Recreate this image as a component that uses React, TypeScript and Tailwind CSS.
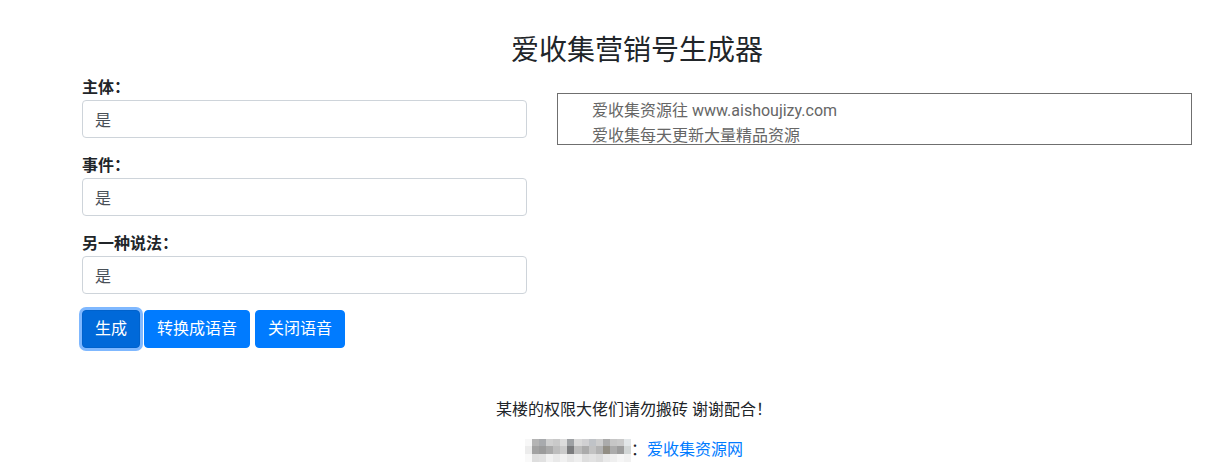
import React from 'react'

const mosaic = [
  ['bg-[#f7f7f7]', 'bg-[#b4b4b4]', 'bg-[#a8aaad]', 'bg-[#cfcfcf]', 'bg-[#c9c9c9]', 'bg-[#dcdcdc]', 'bg-[#9ea1a4]', 'bg-[#d9d9d9]', 'bg-[#d0d0d2]', 'bg-[#c0c3c7]', 'bg-[#cdcdcd]', 'bg-[#ababab]', 'bg-[#c6c6c6]', 'bg-[#cacaca]', 'bg-[#e2e6e8]'],
  ['bg-[#ececec]', 'bg-[#a2a2a2]', 'bg-[#9b9b9b]', 'bg-[#a9a9a9]', 'bg-[#bdbdbd]', 'bg-[#cbcbcb]', 'bg-[#7b7c7e]', 'bg-[#bcbcbc]', 'bg-[#ababab]', 'bg-[#c2c2c2]', 'bg-[#b2b2b2]', 'bg-[#928e84]', 'bg-[#acacac]', 'bg-[#9c9c9c]', 'bg-[#d2d6d6]'],
  ['bg-[#f9f9f9]', 'bg-[#dedede]', 'bg-[#e1e1e1]', 'bg-[#f1f1f1]', 'bg-[#e9e9e9]', 'bg-[#f1f1f1]', 'bg-[#e7e7e7]', 'bg-[#eeeeee]', 'bg-[#dedede]', 'bg-[#e2e2e2]', 'bg-[#dcdcdc]', 'bg-[#e9e9e9]', 'bg-[#efefef]', 'bg-[#f6f6f6]', 'bg-[#f1f1f1]'],
]

const fields = ['主体：', '事件：', '另一种说法：']

const App = () => {
  return (
    <div className="h-[472px] overflow-hidden bg-white text-[#212529] font-['Segoe_UI','Roboto','Noto_Sans_CJK_SC',sans-serif]">
      <div className="w-[1140px] ml-[67px] px-[15px]">
        <h3 className="mt-[34px] mb-2 text-center text-[28px] leading-[34px] font-normal">爱收集营销号生成器</h3>
        <div className="flex gap-[30px]">
          <div className="w-[445px]">
            {fields.map((label) => (
              <div key={label} className="mb-4">
                <label className="block text-base leading-6 font-bold">{label}</label>
                <input
                  defaultValue="是"
                  className="block w-full h-[38px] px-3 text-base text-[#495057] border border-[#ced4da] rounded bg-white outline-none"
                />
              </div>
            ))}
            <div className="flex gap-[4px]">
              <button className="h-[38px] px-3 text-base text-white bg-[#0069d9] border border-[#0062cc] rounded ring-[3px] ring-[#7fb8ff]">生成</button>
              <button className="h-[38px] px-3 text-base text-white bg-[#007bff] border border-[#007bff] rounded">转换成语音</button>
              <button className="h-[38px] px-3 ml-px text-base text-white bg-[#007bff] border border-[#007bff] rounded">关闭语音</button>
            </div>
          </div>
          <div className="w-[635px] mt-[17px]">
            <div className="h-[52px] border border-[#6f6f6f] pl-[34px] pt-[4px] overflow-hidden text-base leading-[25px] text-[#666]">
              <div>爱收集资源往 www.aishoujizy.com</div>
              <div>爱收集每天更新大量精品资源</div>
            </div>
          </div>
        </div>
        <div className="mt-[50px] text-center text-base leading-6">
          <p className="mb-4 pr-[6px]">某楼的权限大佬们请勿搬砖 谢谢配合！</p>
          <div className="flex items-center justify-center pr-[6px]">
            <div className="grid grid-cols-15 w-[106px] h-[23px]">
              {mosaic.flat().map((c, i) => (
                <div key={i} className={c} />
              ))}
            </div>
            <span>：</span>
            <a href="#" className="text-[#007bff]">爱收集资源网</a>
          </div>
        </div>
      </div>
    </div>
  )
}

export default App
